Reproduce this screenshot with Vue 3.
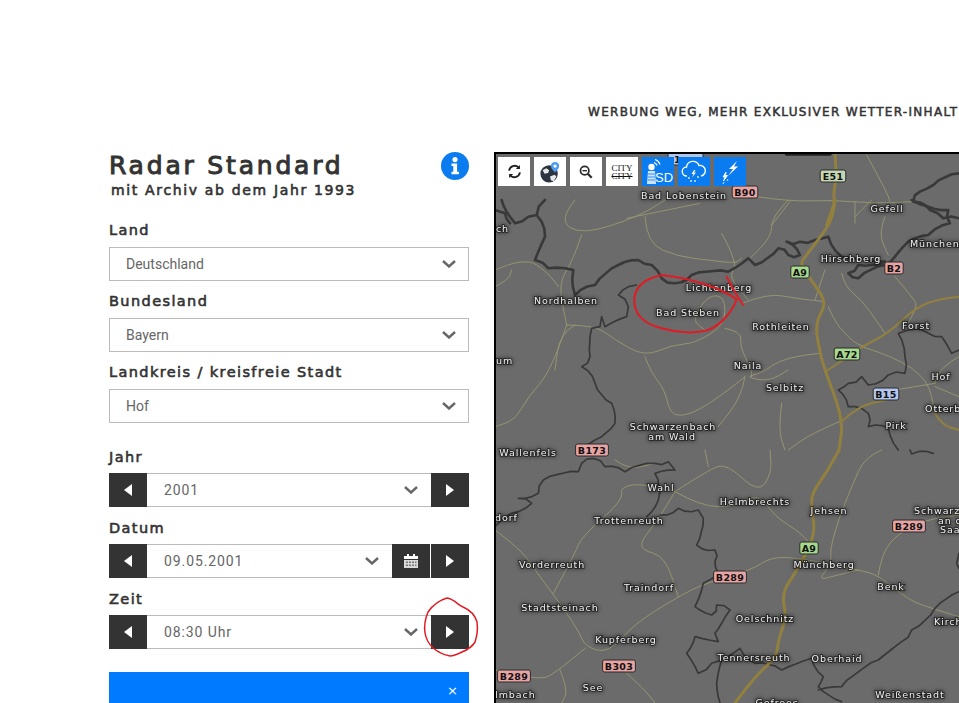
<script setup>
const selects = [
  { label: 'Land', value: 'Deutschland' },
  { label: 'Bundesland', value: 'Bayern' },
  { label: 'Landkreis / kreisfreie Stadt', value: 'Hof' }
]

function parse(d) {
  return d.split('M').filter(Boolean).map((sub) =>
    sub.trim().split(/\s*L\s*/).map((p) => p.split(',').map(Number))
  )
}

// rounds the traced polylines, for roads
function smooth(d) {
  return parse(d).map((pts) => {
    let out = `M${pts[0][0]},${pts[0][1]}`
    for (let i = 1; i < pts.length - 1; i++) {
      const mx = (pts[i][0] + pts[i + 1][0]) / 2
      const my = (pts[i][1] + pts[i + 1][1]) / 2
      out += ` Q${pts[i][0]},${pts[i][1]} ${mx},${my}`
    }
    const last = pts[pts.length - 1]
    return out + ` L${last[0]},${last[1]}`
  }).join(' ')
}

// adds a small fixed wobble, district borders are jagged on the map
function rough(d) {
  return parse(d).map((pts) => {
    let out = `M${pts[0][0]},${pts[0][1]}`
    for (let i = 1; i < pts.length; i++) {
      const [ax, ay] = pts[i - 1]
      const [bx, by] = pts[i]
      const len = Math.hypot(bx - ax, by - ay)
      const steps = Math.max(1, Math.round(len / 22))
      for (let s = 1; s < steps; s++) {
        const t = s / steps
        const n = Math.sin(ax * 12.9 + ay * 78.2 + s * 37.7) * 7
        out += ` L${(ax + (bx - ax) * t - ((by - ay) / len) * n).toFixed(1)},${(ay + (by - ay) * t + ((bx - ax) / len) * n).toFixed(1)}`
      }
      out += ` L${bx},${by}`
    }
    return out
  }).join(' ')
}

const borders = [
  'M20,0 L45,50 L60,70 L100,50 L125,45 L150,0 M0,30 L30,40 L45,70 M125,45 L150,110 L120,180 L160,205 L235,210 L240,285 L300,255 L370,195 L430,180 L470,195 L500,235 L540,250 L590,225 L700,215 L760,175 L780,195 L850,145 L880,165 L915,165 L875,125 L915,125 L960,120 L1000,110 L1040,170 L1170,185 L1090,195 L1060,220 L1090,235 L1170,195 L1200,170 L1240,125 L1300,105 L1365,70 L1360,30 L1300,20 L1250,0'
].map(rough)
const thinBorders = [
  'M425,255 L370,285 L400,320 L395,350 L330,380 L320,350 L315,380 L290,385 L285,470 L260,500 L300,550 L350,610 L360,670 L300,720 L250,750',
  'M1210,400 L1240,390 L1300,400 L1340,410 L1370,460 L1392,450 M1210,400 L1230,470 L1230,520 L1180,525 L1120,555 L1100,530 L1060,550 L1030,570 L1060,620 L1120,640 L1120,680 L1180,685 L1210,750'
].map(rough)
const motorways = [
  'M1020,0 L1015,50 L985,100 L930,170 L915,195 L960,255 L995,310 L960,370 L975,460 L990,510 L1045,660 L1032,750'
].map(smooth)
const thinMotorways = [
  'M1392,290 L1340,295 L1265,320 L1180,400 L1100,440 L1030,490 L990,515 M1045,660 L1090,620 L1170,600 M1320,640 L1340,675 L1392,690'
].map(smooth)
const roads = [
  'M240,0 L190,60 L260,105 L430,50 L510,0 M260,105 L230,190 L190,250 L215,375 M0,210 L90,170 L160,220 L190,260 M0,260 L40,240 L50,210',
  'M450,50 L455,130 L550,170 L640,180 L720,190 L740,175 M680,100 L730,190 L700,230 L760,300 M880,0 L830,50 L830,110 L760,180',
  'M215,375 L300,375 L360,420 L450,470 L530,435 L600,430 L690,375 L690,290 L640,285 L590,360 L630,390 M740,310 L820,280 L900,295 L990,305',
  'M1000,320 L1020,370 L1080,430 L1110,440 M975,460 L870,470 L800,520 L750,530 L820,545 L880,510 M750,530 L640,620 L530,660 L510,570 L470,520 L450,470',
  'M750,530 L740,590 L670,680 M690,385 L740,395 L735,440 L770,510 L770,530 M215,375 L170,510 L100,590 L60,660 L0,680 M240,375 L195,400 L180,510',
  'M860,610 L850,690 L870,750 M1045,660 L950,700 L880,750 M1130,0 L1080,50 M1170,50 L1150,100 L1180,165 M990,210 L960,300 M1040,220 L1050,260 L1100,300 L1150,370 L1170,400',
  'M1200,230 L1260,300 L1265,320 L1240,370 M1100,440 L1200,470 L1300,540 L1320,640 M1320,550 L1200,570 M1392,470 L1340,500 L1320,550 M1392,590 L1320,560'
].map(smooth)

const lowerBorders = [
  'M0,230 L50,190 L110,160 L70,145 L130,130 L145,90 L250,65 L260,40 L295,25 L330,50 L390,65 L480,40 L520,35 L540,60 L480,70 L490,150 L455,200',
  'M495,195 L550,175 L610,180 L625,205 L605,285 L660,300 L660,335 L670,370 L625,400 L600,470 L650,495 L665,465 L705,480 L680,520 L660,550 L670,575 L600,560 L575,610 L610,670 L650,640 L680,630 L735,595 L780,640 L860,660 L950,625 L985,680 L970,710 L1040,755',
  'M680,630 L665,700 L675,759 M970,720 L1040,710 L1150,630 L1220,575 L1250,540 L1320,475 L1392,425 M1245,0 L1250,12 L1315,10 M1392,310 L1385,340 L1392,355'
].map(rough)
const lowerMotorways = [
  'M1032,0 L1000,60 L950,130 L950,180 L960,240 L940,300 L900,370 L860,430 L875,500 L850,570 L845,620 L780,680 L720,759'
].map(smooth)
const lowerRoads = [
  'M0,240 L80,300 L120,360 L180,440 L250,540 L270,590 L340,610 L420,520 L550,440 L630,400 L770,360 L830,320 L920,325 L1090,360 L1150,375 L1240,450 L1310,475 L1392,500',
  'M270,595 L170,680 L130,685 L100,680 M0,660 L40,670 M195,660 L220,720 L200,759 M395,670 L450,720 L480,759',
  'M540,125 L450,100 L375,110 L385,150 L260,260 L240,310 L175,430 M540,125 L640,60 L695,40 L790,130 L830,70 L825,0 M630,0 L640,50',
  'M540,125 L490,210 L440,270 L440,300 L510,320 L550,440 M540,125 L620,170 L720,170 L790,130 L840,200 L920,250 L960,300',
  'M1160,0 L1110,20 L1070,110 L1030,210 L1005,300 L1010,340 L970,390 L1010,380 L1090,360 M1150,375 L1160,310 L1210,250 L1290,210 L1392,195 M360,30 L400,60 L480,40'
].map(smooth)

const topBorder = rough('M1000,320 L1020,290 L1060,270 L1137,235 M1000,320 L1050,345 L1090,370 L1137,370')
const topRoads = smooth('M530,305 L630,320 L760,315 L870,325 L1000,320 M860,180 L920,290 L930,320 M630,320 L575,390 M825,320 L825,385 M360,325 L140,370')
const topMotorway = smooth('M765,175 L770,240 L760,300 L765,320 L740,390')

const places = [
  ['Bad Lobenstein', 684, 195], ['Gefell', 887, 208], ['Hirschberg', 851, 258], ['Nordhalben', 566, 300],
  ['Lichtenberg', 719, 287], ['Bad Steben', 688, 312], ['Rothleiten', 781, 326], ['Forst', 916, 325],
  ['Naila', 748, 365], ['Selbitz', 785, 387], ['Hof', 941, 376], ['Pirk', 896, 425],
  ['Schwarzenbach', 673, 426], ['am Wald', 672, 436], ['Wallenfels', 528, 452], ['Wahl', 661, 487],
  ['Helmbrechts', 755, 501], ['Jehsen', 829, 510], ['Trottenreuth', 629, 520], ['Vorderreuth', 552, 564],
  ['Münchberg', 824, 564], ['Benk', 891, 586], ['Traindorf', 649, 587], ['Stadtsteinach', 560, 607],
  ['Oelschnitz', 765, 618], ['Kupferberg', 626, 639], ['Tennersreuth', 754, 657], ['Oberhaid', 837, 658],
  ['See', 593, 687], ['Weißenstadt', 910, 694], ['Gefrees', 777, 702]
]
const edgePlaces = [
  ['ch', 496, 228], ['Münchenr', 910, 243], ['um', 496, 360], ['Otterb', 925, 408],
  ['Schwarz', 914, 510], ['an o', 938, 520], ['Saa', 940, 529], ['dorf', 495, 517],
  ['Kirch', 934, 621], ['Imbach', 495, 694]
]

const shields = [
  ['B90', 745, 192, 'pink'], ['E51', 833, 176, 'pale'], ['A9', 800, 272, 'green'],
  ['B2', 894, 268, 'pink'], ['A72', 847, 354, 'green'], ['B15', 886, 394, 'blue'], ['B173', 592, 450, 'pink'],
  ['B289', 909, 526, 'pink'], ['A9', 809, 548, 'green'], ['B289', 730, 577, 'pink'], ['B303', 619, 666, 'pink'],
  ['B289', 514, 676, 'pink']
]

function shieldWidth(name) {
  return name.length * 7.2 + 4
}
</script>

<template>
  <div class="page">
    <div class="promo">WERBUNG WEG, MEHR EXKLUSIVER WETTER-INHALTE</div>

    <div class="content">
      <aside class="panel">
        <div class="head">
          <div>
            <h1>Radar Standard</h1>
            <h2>mit Archiv ab dem Jahr 1993</h2>
          </div>
          <svg class="info" viewBox="0 0 28 28">
            <circle cx="14" cy="14" r="14" fill="#0a7cf0" />
            <circle cx="14" cy="7.6" r="2.6" fill="#fff" />
            <path d="M10.500 11.500h5.600v8.200h1.800v2.600h-7.400v-2.600h1.800v-5.600h-1.800z" fill="#fff" />
          </svg>
        </div>

        <div v-for="item in selects" :key="item.label" class="field">
          <label>{{ item.label }}</label>
          <div class="select">
            <span>{{ item.value }}</span>
            <svg class="chevron" viewBox="0 0 14 8"><path d="M1 1l6 5.500L13 1" /></svg>
          </div>
        </div>

        <div class="times">
          <div class="field">
            <label>Jahr</label>
            <div class="stepper">
              <button class="step"><i class="tri left"></i></button>
              <div class="value">
                <span>2001</span>
                <svg class="chevron" viewBox="0 0 14 8"><path d="M1 1l6 5.500L13 1" /></svg>
              </div>
              <button class="step"><i class="tri right"></i></button>
            </div>
          </div>

          <div class="field">
            <label>Datum</label>
            <div class="stepper">
              <button class="step"><i class="tri left"></i></button>
              <div class="value">
                <span>09.05.2001</span>
                <svg class="chevron" viewBox="0 0 14 8"><path d="M1 1l6 5.500L13 1" /></svg>
              </div>
              <button class="step cal">
                <svg viewBox="0 0 14 14" width="14" height="14">
                  <path d="M0 2h14v3H0z" fill="#fff" />
                  <path d="M3 0h2v3H3zM9 0h2v3H9z" fill="#fff" />
                  <path d="M0 6h14v8H0z" fill="#d8d8d8" />
                  <path d="M2 7.500h2v1.500H2zM5 7.500h2v1.500H5zM8 7.500h2v1.500H8zM11 7.500h1.500v1.500H11zM2 10.500h2V12H2zM5 10.500h2V12H5zM8 10.500h2V12H8zM11 10.500h1.500V12H11z" fill="#777" />
                </svg>
              </button>
              <button class="step"><i class="tri right"></i></button>
            </div>
          </div>

          <div class="field">
            <label>Zeit</label>
            <div class="stepper">
              <button class="step"><i class="tri left"></i></button>
              <div class="value">
                <span>08:30 Uhr</span>
                <svg class="chevron" viewBox="0 0 14 8"><path d="M1 1l6 5.500L13 1" /></svg>
              </div>
              <button class="step">
                <i class="tri right"></i>
                <svg class="scribble" viewBox="0 0 60 62">
                  <path d="M25 2C32 3 36 9 41 11C48 14 53 19 55 26C56 33 55 40 53 46C50 51 45 54 40 56C36 58 32 60 28 60C22 59 16 56 11 52C7 48 4 43 3 37C2 30 3 23 6 16C11 9 18 4 25 2Z" />
                </svg>
              </button>
            </div>
          </div>
        </div>

        <div class="notice"><span>×</span></div>
      </aside>

      <section class="map">
        <svg class="chart" viewBox="494 152 465 551" width="465" height="551">
          <g transform="translate(580,95) scale(0.3333)">
            <path class="ln road" :d="topRoads" />
            <path class="ln border" :d="topBorder" />
            <path class="ln blob" d="M620,176 L750,176" />
            <path class="ln mway" :d="topMotorway" />
          </g>
          <g transform="translate(495,200) scale(0.3333)">
            <path v-for="d in roads" :key="d" class="ln road" :d="d" />
            <path v-for="d in thinBorders" :key="d" class="ln border thin" :d="d" />
            <path v-for="d in borders" :key="d" class="ln border" :d="d" />
            <path v-for="d in thinMotorways" :key="d" class="ln mway thin" :d="d" />
            <path v-for="d in motorways" :key="d" class="ln mway" :d="d" />
          </g>
          <g transform="translate(495,450) scale(0.3333)">
            <path v-for="d in lowerRoads" :key="d" class="ln road" :d="d" />
            <path v-for="d in lowerBorders" :key="d" class="ln border thin" :d="d" />
            <path v-for="d in lowerMotorways" :key="d" class="ln mway" :d="d" />
          </g>

          <g class="places">
            <text v-for="p in places" :key="p[0]" :x="p[1]" :y="p[2] + 3.500" text-anchor="middle">{{ p[0] }}</text>
            <text v-for="p in edgePlaces" :key="p[0]" :x="p[1]" :y="p[2] + 3.500">{{ p[0] }}</text>
          </g>

          <g class="shield blue">
            <rect x="668" y="153" width="35" height="12" rx="2" />
            <text x="677.500" y="163" text-anchor="middle">1</text>
          </g>
          <g v-for="s in shields" :key="s[0] + s[1]" class="shield" :class="s[3]">
            <rect :x="s[1] - shieldWidth(s[0]) / 2" :y="s[2] - 6" :width="shieldWidth(s[0])" height="12" rx="2" />
            <text :x="s[1]" :y="s[2] + 4" text-anchor="middle">{{ s[0] }}</text>
          </g>

          <g transform="translate(495,200) scale(0.3333)">
            <path class="ln pen" d="M500,225 C455,235 422,255 418,295 C415,345 450,372 500,385 C545,398 600,402 640,390 C680,375 715,330 725,298 C680,265 590,235 500,225 M695,230 C710,260 725,290 745,315" />
          </g>
        </svg>

        <div class="tools">
          <button class="tool">
            <svg viewBox="0 0 16 16" width="15" height="15">
              <path d="M2.200 7A6 6 0 0 1 12.300 3.600" class="ico" />
              <path d="M13.800 1v4.400H9.400z" fill="#222" />
              <path d="M13.800 9A6 6 0 0 1 3.700 12.400" class="ico" />
              <path d="M2.200 15v-4.400h4.400z" fill="#222" />
            </svg>
          </button>
          <button class="tool">
            <svg viewBox="0 0 24 24" width="22" height="22">
              <circle cx="11" cy="14" r="9.500" fill="#2b3440" />
              <path d="M4 10l4-2 3 2-1 3-4 1zM12 17l5-2 2 2-3 5-3-1z" fill="#e8e8e8" />
              <path d="M17.500 1a4.500 4.500 0 0 1 4.500 4.500c0 3-4.500 7-4.500 7s-4.500-4-4.500-7A4.500 4.500 0 0 1 17.500 1z" fill="#4a9df0" />
              <circle cx="17.500" cy="5.500" r="1.800" fill="#fff" />
            </svg>
          </button>
          <button class="tool">
            <svg viewBox="0 0 16 16" width="14" height="14">
              <circle cx="6.500" cy="6.500" r="4.800" fill="none" stroke="#2a2a2a" stroke-width="2" />
              <path d="M4 6.500h5" stroke="#2a2a2a" stroke-width="1.600" />
              <path d="M10 10l4.500 4.500" stroke="#2a2a2a" stroke-width="2.600" />
            </svg>
          </button>
          <button class="tool city">
            <span>CITY</span>
            <span class="struck">CITY</span>
          </button>
          <button class="tool blue">
            <svg viewBox="0 0 32 29" width="32" height="29">
              <path d="M6 14h7l1 13H5z" fill="#cfe4fb" />
              <path d="M6 17h7M6 20h7M6 23h7" stroke="#0a7cf0" stroke-width="0.800" />
              <circle cx="9.500" cy="10" r="3.200" fill="#fff" />
              <path d="M12 5.500a5 5 0 0 1 3 3M13 2.500a8 8 0 0 1 5 5" fill="none" stroke="#fff" stroke-width="1.200" />
              <text x="13" y="25" class="sd">SD</text>
            </svg>
          </button>
          <button class="tool blue">
            <svg viewBox="0 0 32 29" width="32" height="29">
              <path d="M9 19a4.500 4.500 0 0 1-.5-9A6.500 6.500 0 0 1 21 8.500a5 5 0 0 1 2 10.500" fill="none" stroke="#fff" stroke-width="1.400" />
              <path d="M16 13l-2.500 4h2l-1.500 3.500 4-5h-2l1.500-2.500z" fill="#fff" />
              <path d="M11 20v2M13 23v2M20 19v2M17 23v2" stroke="#dcecff" stroke-width="1.400" />
            </svg>
          </button>
          <button class="tool blue">
            <svg viewBox="0 0 32 29" width="32" height="29">
              <path d="M23 4l-8 8h4l-5 7 10-9.500h-4z" fill="#fff" />
              <path d="M12 15l-3 5h2l-1.500 4 4-5.500h-2zM10 25l-1 2M14 22l-1 2" fill="#fff" stroke="#fff" stroke-width="0.800" />
            </svg>
          </button>
        </div>
      </section>
    </div>
  </div>
</template>

<style>
html,
body {
  background: #fff;
  overflow: hidden;
}
</style>

<style scoped>
.page {
  width: 959px;
  height: 703px;
  overflow: hidden;
  background: #fff;
  font-family: "DejaVu Sans", sans-serif;
  color: #333;
}

.promo {
  padding: 105px 0 0 588px;
  height: 152px;
  box-sizing: border-box;
  font-size: 12px;
  line-height: 14px;
  -webkit-text-stroke: 0.5px #333;
  letter-spacing: 1.3px;
  white-space: nowrap;
}

.content {
  display: flex;
  gap: 25px;
  padding-left: 109px;
}

.panel {
  width: 360px;
  flex: none;
}

.head {
  display: flex;
  justify-content: space-between;
  align-items: flex-start;
  height: 60px;
}

h1 {
  margin: 0;
  font-size: 25px;
  line-height: 28px;
  font-weight: 400;
  -webkit-text-stroke: 1px #333;
  letter-spacing: 2.8px;
}

h2 {
  margin: 1px 0 0 2px;
  font-size: 14px;
  line-height: 18px;
  font-weight: 400;
  -webkit-text-stroke: 0.6px #333;
  letter-spacing: 1.65px;
}

.info {
  width: 28px;
  height: 28px;
}

.field {
  height: 71px;
}

.field label {
  display: block;
  height: 35px;
  padding-top: 9px;
  box-sizing: border-box;
  font-size: 14.500px;
  line-height: 18px;
  -webkit-text-stroke: 0.6px #333;
  letter-spacing: 1.4px;
}

.times {
  margin-top: 13px;
}

.times .field label {
  padding-top: 10px;
}

.select {
  display: flex;
  align-items: center;
  justify-content: space-between;
  height: 34px;
  box-sizing: border-box;
  border: 1px solid #bbb;
  padding: 0 12px 0 16px;
}

.select span,
.value span {
  font-family: Roboto, sans-serif;
  font-size: 14px;
  color: #666;
}

.value span {
  letter-spacing: 0.9px;
}

.chevron {
  width: 14px;
  height: 8px;
}

.chevron path {
  fill: none;
  stroke: #666;
  stroke-width: 2.400;
}

.stepper {
  display: flex;
  height: 34px;
}

.step {
  position: relative;
  flex: none;
  width: 38px;
  height: 34px;
  border: 0;
  padding: 0;
  background: #333;
  display: flex;
  align-items: center;
  justify-content: center;
}

.step.cal {
  margin-right: 1px;
}

.value {
  flex: 1;
  display: flex;
  align-items: center;
  justify-content: space-between;
  box-sizing: border-box;
  border-top: 1px solid #bbb;
  border-bottom: 1px solid #bbb;
  padding: 0 13px 0 17px;
}

.tri {
  width: 0;
  height: 0;
  border-top: 6.500px solid transparent;
  border-bottom: 6.500px solid transparent;
}

.tri.left {
  border-right: 8px solid #fff;
}

.tri.right {
  border-left: 8px solid #fff;
}

.scribble {
  position: absolute;
  left: -9px;
  top: -19px;
  width: 60px;
  height: 62px;
}

.scribble path {
  fill: none;
  stroke: #e01b24;
  stroke-width: 1.500;
}

.notice {
  margin-top: 21px;
  height: 60px;
  background: #007bff;
  color: #fff;
  display: flex;
  justify-content: flex-end;
  padding: 9px 11px 0 0;
  box-sizing: border-box;
  font-size: 13px;
  line-height: 20px;
}

.map {
  position: relative;
  flex: none;
  width: 465px;
  height: 551px;
  background: #6b6b6b;
  overflow: hidden;
  border-top: 2px solid #000;
  border-left: 2px solid #000;
  box-sizing: border-box;
}

.chart {
  position: absolute;
  left: -2px;
  top: -2px;
}

.ln {
  fill: none;
  stroke-linejoin: round;
  stroke-linecap: round;
  vector-effect: non-scaling-stroke;
}

.road {
  stroke: #9a9870;
  stroke-width: 0.900;
}

.border {
  stroke: #393939;
  stroke-width: 2.600;
}

.border.thin {
  stroke-width: 1.700;
}

.blob {
  stroke: #222;
  stroke-width: 4;
}

.mway {
  stroke: #92803f;
  stroke-width: 3;
}

.mway.thin {
  stroke-width: 2;
}

.pen {
  stroke: #e01b24;
  stroke-width: 2;
}

.places text {
  font-family: "DejaVu Sans", sans-serif;
  font-size: 9.500px;
  letter-spacing: 0.900px;
  fill: #f0f0f0;
  stroke: rgba(20, 20, 20, 0.6);
  stroke-width: 2px;
  paint-order: stroke;
}

.places {
  filter: drop-shadow(0 0 2px rgba(0, 0, 0, 0.8));
}

.shield rect {
  stroke: #2b2b2b;
  stroke-width: 1;
}

.shield text {
  font-family: "DejaVu Sans", sans-serif;
  font-weight: 700;
  font-size: 9.500px;
  letter-spacing: 0.300px;
  fill: #111;
}

.pink rect {
  fill: #e8a3a3;
}

.green rect {
  fill: #a6d88e;
}

.pale rect {
  fill: #c4d6b4;
}

.blue rect {
  fill: #b3c6ee;
}

.tools {
  position: absolute;
  left: 2px;
  top: 3px;
  display: flex;
  gap: 4px;
}

.tool {
  width: 32px;
  height: 29px;
  border: 0;
  padding: 0;
  background: #fff;
  display: flex;
  flex-direction: column;
  align-items: center;
  justify-content: center;
}

.tool.blue {
  background: #0a7cf0;
}

.tool svg {
  display: block;
}

.ico {
  fill: none;
  stroke: #222;
  stroke-width: 2;
}

.city {
  font-family: "Liberation Serif", serif;
  font-size: 9px;
  line-height: 8px;
  color: #111;
}

.struck {
  text-decoration: line-through;
}

.sd {
  font-family: "Liberation Sans", sans-serif;
  font-size: 13px;
  fill: #fff;
}
</style>
